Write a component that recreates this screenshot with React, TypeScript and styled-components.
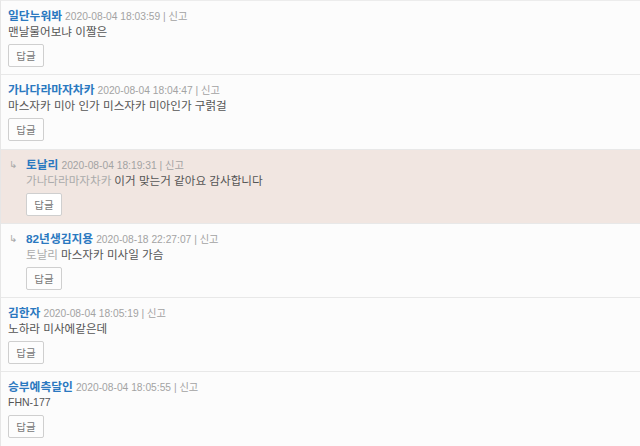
import React from 'react';
import styled, { createGlobalStyle } from 'styled-components';

const GlobalStyle = createGlobalStyle`
  html, body {
    margin: 0;
    padding: 0;
    background: #fcfcfc;
  }
  body {
    font-family: "Liberation Sans", "Noto Sans CJK KR", sans-serif;
  }
`;

const CommentList = styled.ul`
  list-style: none;
  margin: 0;
  padding: 0;
  border-top: 1px solid #ececec;
  border-left: 1px solid #e6e6e6;
  background: #fcfcfc;
`;

const CommentItem = styled.li<{ $highlight?: boolean }>`
  display: flex;
  padding: 5px 0 7.25px 7px;
  border-bottom: 1px solid #e8e8e8;
  background: ${(p) => (p.$highlight ? '#f1e6e1' : 'transparent')};
`;

const ReplyMark = styled.span`
  flex: 0 0 17px;
  font-family: "DejaVu Sans", sans-serif;
  font-size: 10px;
  line-height: 19px;
  color: #aaa;
  padding-left: 1px;
`;

const CommentBody = styled.div`
  display: flex;
  flex-direction: column;
  align-items: flex-start;
`;

const Meta = styled.div`
  height: 17px;
  line-height: 17px;
  white-space: nowrap;
`;

const Author = styled.a`
  color: #2a78c0;
  font-size: 11.75px;
  font-weight: bold;
  text-decoration: none;
`;

const Stamp = styled.span`
  color: #a3a3a3;
  font-size: 10.25px;
  margin-left: 3px;
`;

const Text = styled.p<{ $latin?: boolean }>`
  margin: 0;
  height: 17px;
  line-height: 17px;
  font-size: ${(p) => (p.$latin ? '10.5px' : '11.6px')};
  color: #555;
`;

const Mention = styled.span`
  color: #ababab;
  margin-right: 3px;
`;

const ReplyButton = styled.button<{ $white?: boolean }>`
  margin-top: 4px;
  width: 36px;
  height: 23px;
  padding: 0;
  border: 1px solid #cfcfcf;
  border-radius: 2px;
  background: ${(p) => (p.$white ? '#fff' : '#fdfdfd')};
  color: #777;
  font-family: "Liberation Sans", "Noto Sans CJK KR", sans-serif;
  font-size: 10.5px;
  cursor: pointer;
`;

type Comment = {
  id: number;
  author: string;
  date: string;
  text: string;
  mention?: string;
  reply?: boolean;
  highlight?: boolean;
};

const comments: Comment[] = [
  { id: 1, author: '일단누워봐', date: '2020-08-04 18:03:59', text: '맨날물어보냐 이짤은' },
  { id: 2, author: '가나다라마자차카', date: '2020-08-04 18:04:47', text: '마스자카 미아 인가 미스자카 미아인가 구럵걸' },
  {
    id: 3,
    author: '토날리',
    date: '2020-08-04 18:19:31',
    mention: '가나다라마자차카',
    text: '이거 맞는거 같아요 감사합니다',
    reply: true,
    highlight: true,
  },
  {
    id: 4,
    author: '82년생김지용',
    date: '2020-08-18 22:27:07',
    mention: '토날리',
    text: '마스자카 미사일 가슴',
    reply: true,
  },
  { id: 5, author: '김한자', date: '2020-08-04 18:05:19', text: '노하라 미사에같은데' },
  { id: 6, author: '승부예측달인', date: '2020-08-04 18:05:55', text: 'FHN-177' },
];

const isLatin = (s: string) => /^[\x00-\x7f]+$/.test(s);

const App: React.FC = () => {
  return (
    <>
      <GlobalStyle />
      <CommentList>
        {comments.map((c) => (
          <CommentItem key={c.id} $highlight={c.highlight}>
            {c.reply && <ReplyMark>↳</ReplyMark>}
            <CommentBody>
              <Meta>
                <Author href="#">{c.author}</Author>
                <Stamp>{c.date} | 신고</Stamp>
              </Meta>
              <Text $latin={isLatin(c.text)}>
                {c.mention && <Mention>{c.mention}</Mention>}
                {c.text}
              </Text>
              <ReplyButton $white={c.highlight}>답글</ReplyButton>
            </CommentBody>
          </CommentItem>
        ))}
      </CommentList>
    </>
  );
};

export default App;
